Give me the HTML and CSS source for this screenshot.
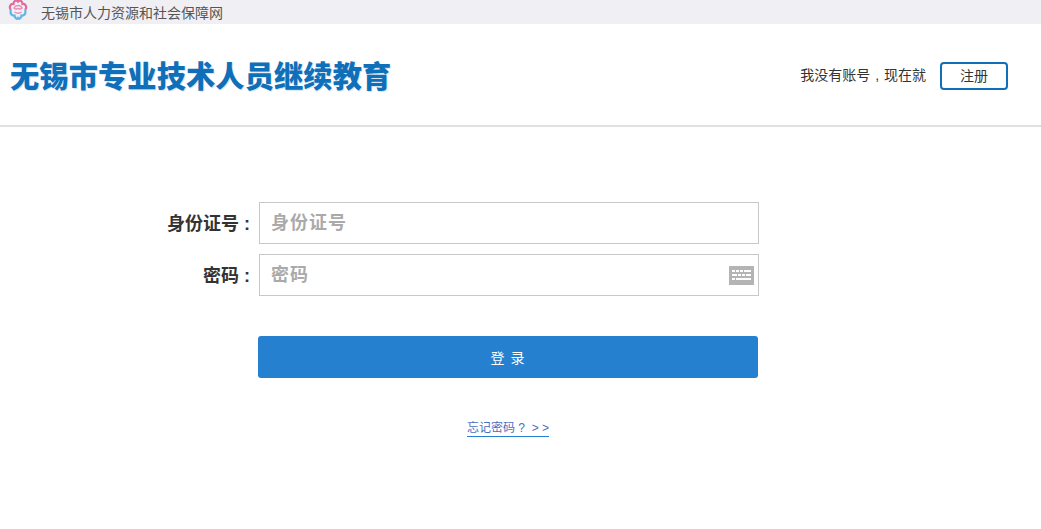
FILE: index.html
```html
<!DOCTYPE html>
<html lang="zh-CN">
<head>
    <meta charset="UTF-8">
    <meta name="viewport" content="width=device-width, initial-scale=1.0">
    <title>无锡市专业技术人员继续教育</title>
    <link rel="stylesheet" href="styles.css">
</head>
<body>
    <!-- Top bar -->
    <div class="topbar">
        <svg class="topbar-logo" width="20" height="20" viewBox="0 0 20 20" fill="none">
            <path d="M3 10C.5 7 2.500 3.500 5.500 4 5.500 1 8.500-.5 10 1.500 11.500-.5 14.500 1 14.500 4 17.500 3.500 19.500 7 17 10" stroke="#e56a9c" stroke-width="2.200"/>
            <path d="M3 10c-1.500 3.500 1 6 3.500 5.500C7 18.500 9 19.500 10 18c1 1.500 3 .5 3.500-2.500C16 16 18.500 13.500 17 10" stroke="#62b4e8" stroke-width="2.200"/>
            <path d="M6 8c1.500-3 6.500-3.500 8 0-2 2-3 .5-4 .5S8 10 6 8zM6.500 12c2 1.500 5 1.500 7 0" stroke="#e88fb5" stroke-width="1.500"/>
        </svg>
        <span>无锡市人力资源和社会保障网</span>
    </div>

    <!-- Header -->
    <div class="header">
        <h1 class="site-title">无锡市专业技术人员继续教育</h1>
        <div class="register">
            <span>我没有账号 , 现在就</span>
            <a href="#" class="register-btn">注册</a>
        </div>
    </div>

    <!-- Login form -->
    <form class="login-form">
        <div class="form-row">
            <label class="form-label" for="idcard">身份证号 :</label>
            <input class="form-input" id="idcard" type="text" placeholder="身份证号">
        </div>
        <div class="form-row">
            <label class="form-label" for="password">密码 :</label>
            <div class="input-wrap">
                <input class="form-input" id="password" type="text" placeholder="密码">
                <svg class="keyboard-icon" width="25" height="19" viewBox="0 0 25 19">
                    <rect width="25" height="19" fill="#b4b4b4"/>
                    <path d="M3 4h3v2H3zM7 4h3v2H7zM11 4h3v2h-3zM15 4h7v2h-7zM3 8h5v2H3zM9 8h3v2H9zM13 8h3v2h-3zM17 8h5v2h-5zM3 12h3v2H3zM7 12h15v2H7z" fill="#fff"/>
                </svg>
            </div>
        </div>
        <button class="login-btn" type="button">登 录</button>
        <div class="forgot">
            <a href="#">忘记密码 ?&nbsp; &gt; &gt;</a>
        </div>
    </form>
</body>
</html>
```

FILE: styles.css
```css
body {
    font-family: "Liberation Sans", "Noto Sans CJK SC", sans-serif;
    margin: 0;
    padding: 0;
    background-color: #fff;
    color: #333;
}

/* Top bar */
.topbar {
    display: flex;
    align-items: center;
    height: 24px;
    padding-left: 8px;
    background-color: #efeff4;
    font-size: 14px;
    color: #555;
}

.topbar-logo {
    margin-right: 13px;
    margin-bottom: 4px;
}

/* Header */
.header {
    display: flex;
    justify-content: space-between;
    align-items: center;
    height: 101px;
    padding: 0 33px 0 10px;
    border-bottom: 2px solid #e0e0e0;
}

.site-title {
    margin: 6px 0 0;
    font-size: 29.2px;
    font-weight: 900;
    line-height: 1;
    letter-spacing: 0.15px;
    color: #0f6fb8;
    text-shadow: 1px 1px 1px #cfe3f3;
    white-space: nowrap;
}

.register {
    display: flex;
    align-items: center;
    font-size: 14px;
    word-spacing: 1px;
}

.register span {
    margin-right: 14px;
    margin-bottom: 2px;
}

.register-btn {
    display: block;
    width: 64px;
    height: 24px;
    margin-top: 2px;
    line-height: 24px;
    border: 2px solid #0f6fb8;
    border-radius: 4px;
    text-align: center;
    text-decoration: none;
    color: #333;
}

/* Login form */
.login-form {
    margin-top: 75px;
}

.form-row {
    display: flex;
    align-items: center;
    gap: 9px;
    height: 42px;
    margin-bottom: 10px;
}

.form-label {
    flex: none;
    box-sizing: border-box;
    width: 250px;
    padding-bottom: 2px;
    text-align: right;
    font-size: 18px;
    font-weight: bold;
    white-space: nowrap;
}

.form-input {
    box-sizing: border-box;
    display: block;
    flex: none;
    width: 500px;
    height: 42px;
    padding: 0 11px;
    border: 1px solid #c8c8c8;
    outline: none;
    font-family: inherit;
    font-size: 18px;
    font-weight: bold;
    letter-spacing: 1px;
    color: #333;
}

.form-input::placeholder {
    color: #aaa;
}

.input-wrap {
    position: relative;
    flex: none;
    width: 500px;
}

.keyboard-icon {
    position: absolute;
    top: 12px;
    right: 5px;
}

.login-btn {
    display: block;
    width: 500px;
    height: 42px;
    margin: 40px 0 0 258px;
    border: none;
    border-radius: 3px;
    background-color: #2580d0;
    color: #fff;
    font-family: inherit;
    font-size: 14px;
    letter-spacing: 1px;
    cursor: pointer;
}

.forgot {
    width: 500px;
    margin: 43px 0 0 258px;
    text-align: center;
    font-size: 12px;
    line-height: 15px;
}

.forgot a {
    display: inline-block;
    border-bottom: 1px solid #2580d0;
    color: #4a6fc0;
    text-decoration: none;
}
```
